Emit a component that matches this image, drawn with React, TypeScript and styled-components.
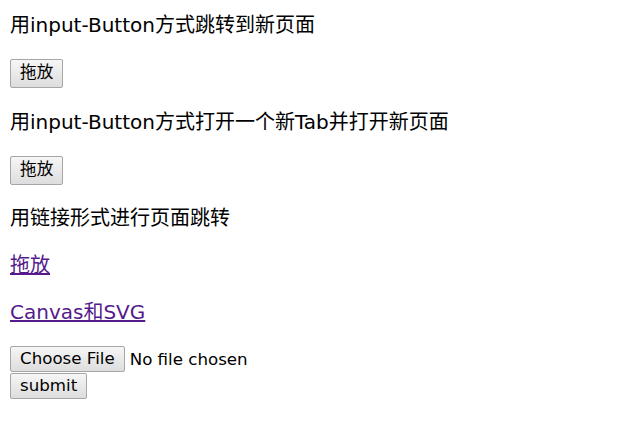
import React from "react";
import styled, { createGlobalStyle } from "styled-components";

const Global = createGlobalStyle`
  html, body {
    background: #fff;
  }
  body {
    margin: 10px;
    font-family: "DejaVu Sans", "Noto Sans CJK SC", sans-serif;
    font-size: 20px;
    color: #000;
  }
`;

const Page = styled.div`
  display: flex;
  flex-direction: column;
  align-items: flex-start;
`;

const Caption = styled.div<{ $mt?: number }>`
  height: 30px;
  line-height: 30px;
  margin-top: ${(p) => p.$mt ?? 0}px;
  white-space: nowrap;
`;

const ButtonRow = styled.div<{ $mt: number }>`
  display: flex;
  align-items: center;
  gap: 5px;
  margin-top: ${(p) => p.$mt}px;
`;

const Btn = styled.button`
  font-family: "DejaVu Sans", "Noto Sans CJK SC", sans-serif;
  font-size: 16.67px;
  color: #000;
  box-sizing: border-box;
  height: ${(p: { $h?: number }) => p.$h ?? 29}px;
  padding: 0 9px;
  border: 1px solid #a6a6a6;
  border-radius: 2px;
  background: linear-gradient(#f6f6f6, #dddddd);
  margin: 0;
  display: inline-flex;
  align-items: center;
  line-height: 1;
`;

const Link = styled.a`
  color: #551a8b;
  text-decoration: underline;
`;

const FileText = styled.span`
  font-size: 16.67px;
  white-space: nowrap;
`;

export default function App() {
  return (
    <>
      <Global />
      <Page>
        <Caption>用input-Button方式跳转到新页面</Caption>
        <ButtonRow $mt={19}>
          <Btn>拖放</Btn>
        </ButtonRow>
        <Caption $mt={19}>用input-Button方式打开一个新Tab并打开新页面</Caption>
        <ButtonRow $mt={19}>
          <Btn>拖放</Btn>
        </ButtonRow>
        <Caption $mt={18}>用链接形式进行页面跳转</Caption>
        <Caption $mt={17}>
          <Link href="#">拖放</Link>
        </Caption>
        <Caption $mt={17}>
          <Link href="#">Canvas和SVG</Link>
        </Caption>
        <ButtonRow $mt={19}>
          <Btn $h={26}>Choose File</Btn>
          <FileText>No file chosen</FileText>
        </ButtonRow>
        <ButtonRow $mt={1}>
          <Btn $h={26}>submit</Btn>
        </ButtonRow>
      </Page>
    </>
  );
}
